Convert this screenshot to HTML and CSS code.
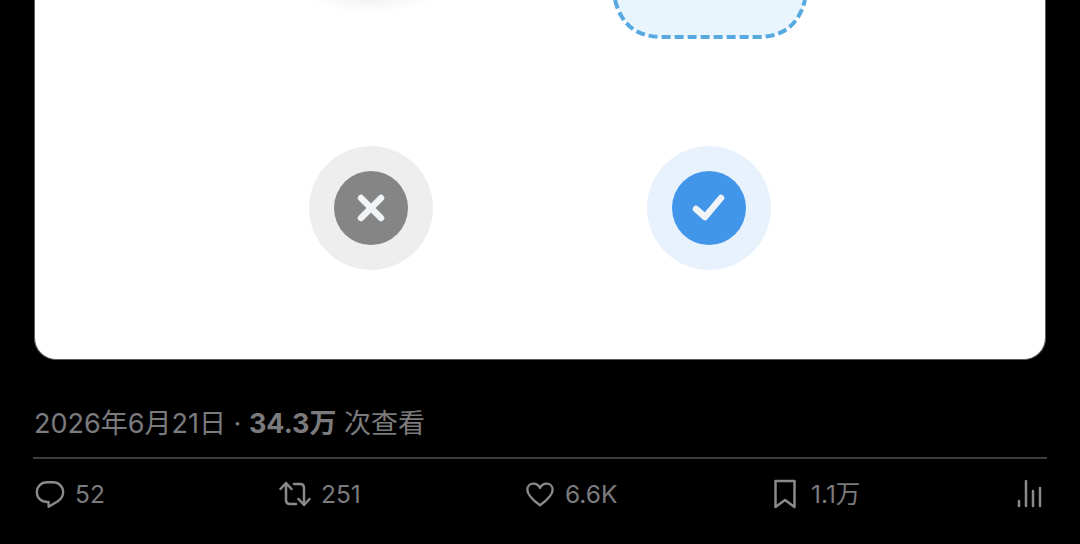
FILE: index.html
```html
<!DOCTYPE html>
<html lang="zh">
<head>
<meta charset="utf-8">
<title>Post</title>
<link rel="stylesheet" href="styles.css">
</head>
<body>
<main class="post">
  <section class="card">
    <div class="shapes">
      <div class="blob"></div>
      <svg class="dashed" width="196" height="40" viewBox="0 0 196 40">
        <path class="dashed-fill" d="M3 0 C9 24 24 37 50 37 H146 C172 37 187 24 193 0 Z"/>
        <path class="dashed-line" d="M3 0 C9 24 24 37 50 37 H146 C172 37 187 24 193 0"/>
      </svg>
    </div>
    <div class="marks">
      <div class="halo halo-no">
        <div class="disc disc-no">
          <svg width="34" height="34" viewBox="0 0 34 34"><path class="glyph" d="M7 7 L27 27 M27 7 L7 27"/></svg>
        </div>
      </div>
      <div class="halo halo-yes">
        <div class="disc disc-yes">
          <svg width="34" height="34" viewBox="0 0 34 34"><path class="glyph" d="M4 18 L13 26 L29 7"/></svg>
        </div>
      </div>
    </div>
  </section>
  <p class="meta">2026年6月21日 · <strong>34.3万</strong> 次查看</p>
  <div class="stats">
    <div class="stat stat-reply">
      <svg class="icon" width="30" height="30" viewBox="0 0 32 32"><path d="M13 3.500 H19 C25.500 3.500 30 8 30 14 C30 18.500 27.500 21.500 24 24 L14.500 29.500 V24.500 H13 C6.500 24.500 2 20 2 14 C2 8 6.500 3.500 13 3.500 Z"/></svg>
      <span>52</span>
    </div>
    <div class="stat stat-repost">
      <svg class="icon" width="32" height="32" viewBox="0 0 32 32"><path d="M1.500 11 L7 5 L12.500 11 M7 5.500 V22 C7 24.500 8.500 26 11 26 H17 M15 6 H21 C23.500 6 25 7.500 25 10 V26.500 M19.500 21 L25 27 L30.500 21"/></svg>
      <span>251</span>
    </div>
    <div class="stat stat-like">
      <svg class="icon" width="30" height="30" viewBox="0 0 32 32"><path d="M16 28 C9 23 2.500 17.500 2.500 11.500 C2.500 7.500 5.500 5 9 5 C12 5 14.500 6.500 16 9.500 C17.500 6.500 20 5 23 5 C26.500 5 29.500 7.500 29.500 11.500 C29.500 17.500 23 23 16 28 Z"/></svg>
      <span>6.6K</span>
    </div>
    <div class="stat stat-save">
      <svg class="icon" width="32" height="32" viewBox="0 0 32 32"><path d="M6.500 3 H25.500 V29 L16 22 L6.500 29 Z"/></svg>
      <span>1.1万</span>
    </div>
    <svg class="icon icon-views" width="28" height="28" viewBox="0 0 28 28"><path d="M3 26 V21 M10 26 V1 M17 26 V11 M24 26 V8"/></svg>
  </div>
</main>
</body>
</html>
```
FILE: styles.css
```css
* { box-sizing: border-box; }
html, body { margin: 0; padding: 0; }
body {
  width: 1080px;
  height: 544px;
  overflow: hidden;
  background: #000;
  font-family: "Inter", "Liberation Sans", "Noto Sans CJK SC", sans-serif;
  color: #7b7b7d;
}
.post { padding: 0 33px; }
.card {
  margin: 0 1px;
  height: 360px;
  background: #fff;
  border: 1px solid #5c5c5c;
  border-top: 0;
  border-radius: 0 0 22px 22px;
  padding-left: 273.500px;
}
.shapes {
  display: flex;
  align-items: flex-start;
  height: 111px;
}
.blob {
  width: 124px;
  height: 12px;
  background: radial-gradient(ellipse 50% 100% at 50% 0, #f3f3f3, #fff);
  flex: none;
}
.dashed { flex: none; margin-left: 179px; display: block; }
.dashed-fill { fill: #e9f5fd; }
.dashed-line {
  fill: none;
  stroke: #57a9e0;
  stroke-width: 4;
  stroke-dasharray: 9 4;
}
.marks { display: flex; gap: 214px; margin-top: 35px; }
.halo {
  width: 124px;
  height: 124px;
  border-radius: 50%;
  display: flex;
  align-items: center;
  justify-content: center;
}
.halo-no { background: #eeeeee; }
.halo-yes { background: #e7f2fd; }
.disc {
  width: 74px;
  height: 74px;
  border-radius: 50%;
  display: flex;
  align-items: center;
  justify-content: center;
}
.disc-no { background: #858585; }
.disc-yes { background: #4296ea; }
.glyph {
  fill: none;
  stroke: #f1f4f7;
  stroke-width: 6.500;
  stroke-linecap: round;
  stroke-linejoin: round;
}
.meta {
  margin: 0;
  padding: 46px 1px 0;
  height: 99px;
  font-size: 27px;
  line-height: 36px;
  border-bottom: 2px solid #3d3d3d;
  white-space: nowrap;
}
.meta strong { font-weight: 700; }
.stats {
  display: flex;
  align-items: center;
  height: 70px;
  padding: 0 3px 0 2px;
  font-size: 24.500px;
  line-height: 30px;
}
.stat { display: flex; align-items: center; gap: 10px; flex: none; }
.stat-reply { width: 244px; }
.stat-repost { width: 246px; }
.stat-like { width: 244px; }
.stat-save { flex: 1; }
.icon {
  fill: none;
  stroke: #8a8a8b;
  stroke-width: 2.500;
  stroke-linejoin: round;
  stroke-linecap: round;
  flex: none;
}
.icon-views { stroke-width: 2.500; }
```
